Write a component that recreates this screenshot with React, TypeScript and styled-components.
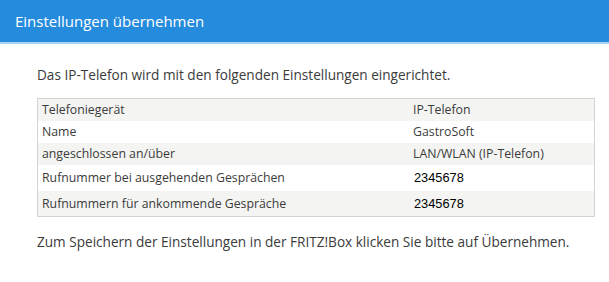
import styled, { createGlobalStyle } from "styled-components";

const Global = createGlobalStyle`
    html, body {
        margin: 0;
        padding: 0;
        background: #ffffff;
    }
    body {
        font-family: "Open Sans", "Liberation Sans", sans-serif;
        color: #3b3b3b;
    }
`;

const Page = styled.div`
    width: 609px;
    height: 282px;
    overflow: hidden;
    background: #ffffff;
`;

const Header = styled.header`
    display: flex;
    align-items: center;
    height: 44px;
    padding: 0 15px;
    background-color: #258bdd;
    border-bottom: 2px solid #a9d2f3;
    box-sizing: border-box;
`;

const Title = styled.h1`
    margin: 0;
    font-size: 15px;
    font-weight: 400;
    color: #ffffff;
`;

const Content = styled.main`
    padding: 21px 15px 0 37px;
    display: flex;
    flex-direction: column;
`;

const Text = styled.p`
    margin: 0;
    font-size: 13.6px;
    line-height: 20px;
`;

const Table = styled.table`
    margin: 13px 0 15px;
    width: 558px;
    border-collapse: collapse;
    border: 1px solid #d3d3cf;
    font-size: 12.3px;
`;

const Row = styled.tr<{ $striped: boolean; $tall?: boolean }>`
    background: ${(p) => (p.$striped ? "#f4f4f2" : "#ffffff")};
    height: ${(p) => (p.$tall ? "26px" : "22px")};
`;

const Label = styled.td`
    padding: 0 4px;
    width: 363px;
`;

const Value = styled.td<{ $plain?: boolean }>`
    padding: 0 4px 0 ${(p) => (p.$plain ? "5px" : "4px")};
    font-family: ${(p) => (p.$plain ? '"Liberation Sans", Arial, sans-serif' : "inherit")};
    font-size: ${(p) => (p.$plain ? "12.8px" : "inherit")};
    color: ${(p) => (p.$plain ? "#000000" : "inherit")};
`;

const rows = [
    { label: "Telefoniegerät", value: "IP-Telefon" },
    { label: "Name", value: "GastroSoft" },
    { label: "angeschlossen an/über", value: "LAN/WLAN (IP-Telefon)" },
    { label: "Rufnummer bei ausgehenden Gesprächen", value: "2345678", plain: true },
    { label: "Rufnummern für ankommende Gespräche", value: "2345678", plain: true },
];

export default function App() {
    return (
        <Page>
            <Global />
            <Header>
                <Title>Einstellungen übernehmen</Title>
            </Header>
            <Content>
                <Text>Das IP-Telefon wird mit den folgenden Einstellungen eingerichtet.</Text>
                <Table>
                    <tbody>
                        {rows.map((r, i) => (
                            <Row key={r.label} $striped={i % 2 === 0} $tall={i > 2}>
                                <Label>{r.label}</Label>
                                <Value $plain={r.plain}>{r.value}</Value>
                            </Row>
                        ))}
                    </tbody>
                </Table>
                <Text>Zum Speichern der Einstellungen in der FRITZ!Box klicken Sie bitte auf Übernehmen.</Text>
            </Content>
        </Page>
    );
}
